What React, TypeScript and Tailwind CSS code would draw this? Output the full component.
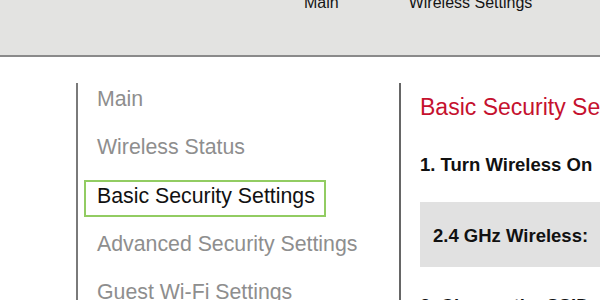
export default function App() {
  const items = [
    "Main",
    "Wireless Status",
    "Basic Security Settings",
    "Advanced Security Settings",
    "Guest Wi-Fi Settings",
  ]
  const active = "Basic Security Settings"

  return (
    <div className="w-[600px] h-[300px] overflow-hidden bg-white font-['Liberation_Sans',Arial,sans-serif]">
      {/* Top bar */}
      <header className="flex items-start h-[57px] bg-[#e3e3e1] border-b-2 border-[#8a8a8a]">
        <nav className="flex gap-[70px] ml-[304px] -mt-[7px] text-[16px] leading-[20px] text-[#151515]">
          <span>Main</span>
          <span>Wireless Settings</span>
        </nav>
      </header>

      <div className="flex pt-[26px]">
        {/* Sidebar */}
        <aside className="shrink-0 ml-[76px] w-[325px] h-[300px] border-l-2 border-r-2 border-l-[#7a7a7a] border-r-[#666666] pl-[6px] flex flex-col gap-[11.3px]">
          {items.map((item) => (
            <div
              key={item}
              className={
                item === active
                  ? "self-start h-[37px] border-2 border-[#92cc62] pl-[11px] pr-[9px] pb-[4px] text-[21.3px] leading-[29px] text-[#111111] whitespace-nowrap"
                  : "self-start h-[37px] border-2 border-transparent pl-[11px] pr-[9px] pb-[4px] text-[21.3px] leading-[29px] text-[#8e8e8e] whitespace-nowrap"
              }
            >
              {item}
            </div>
          ))}
        </aside>

        {/* Content */}
        <main className="flex-1 min-w-0 pl-[19px] pt-[10px] whitespace-nowrap">
          <h1 className="text-[23px] leading-[28px] text-[#c5112e]">Basic Security Settings</h1>
          <h2 className="mt-[32.6px] text-[18.5px] leading-[22px] font-bold text-[#111111]">
            1. Turn Wireless On
          </h2>
          <div className="mt-[26.4px] h-[65px] bg-[#e1e1e1] pl-[13px] pt-[23px]">
            <span className="text-[18.5px] leading-[22px] font-bold text-[#111111]">2.4 GHz Wireless:</span>
          </div>
          <h2 className="mt-[28px] text-[18.5px] leading-[22px] font-bold text-[#111111]">
            2. Change the SSID
          </h2>
        </main>
      </div>
    </div>
  )
}
